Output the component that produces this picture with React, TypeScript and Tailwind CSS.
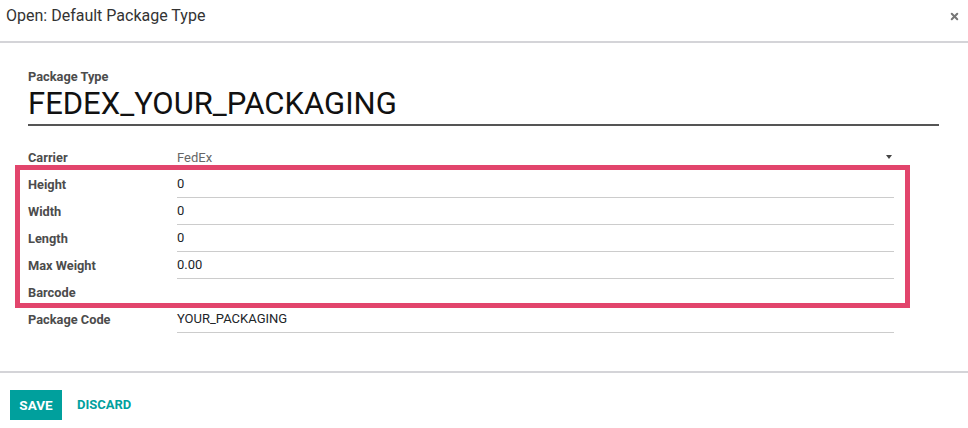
import { X } from "lucide-react";

const rows = [
  { label: "Height", value: "0" },
  { label: "Width", value: "0" },
  { label: "Length", value: "0" },
  { label: "Max Weight", value: "0.00" },
  { label: "Barcode", value: "", noLine: true },
];

const Row = ({ label, value, noLine }: { label: string; value: string; noLine?: boolean }) => (
  <div className="flex h-[27px] items-stretch pl-[28px]">
    <div className="flex w-[149px] items-center text-[12.8px] font-bold text-[#4c4c4c]">{label}</div>
    <div
      className={`flex w-[717px] items-center text-[13px] text-[#212529] ${
        noLine ? "" : "border-b border-[#ccc]"
      }`}
    >
      {value}
    </div>
  </div>
);

const App = () => {
  return (
    <div className="flex h-[428px] w-[968px] flex-col bg-white font-['Roboto',sans-serif]">
      {/* Header */}
      <div className="flex h-[43px] items-center justify-between border-b-2 border-[#d4d4d8] pl-[6px] pr-[8px] pb-[9px]">
        <span className="text-[16px] text-[#333]">Open: Default Package Type</span>
        <X className="h-[11px] w-[11px] text-[#777]" strokeWidth={4.5} />
      </div>

      {/* Body */}
      <div className="flex-1">
        <div className="px-[28px] pt-[27px]">
          <div className="text-[12.8px] font-bold leading-[14px] text-[#4c4c4c]">Package Type</div>
          <div className="mt-[2px] w-[911px] border-b-2 border-[#555] pb-[2px] text-[31px] leading-[36px] text-[#111]">
            FEDEX_YOUR_PACKAGING
          </div>
        </div>

        <div className="relative mt-[18px]">
          {/* Carrier */}
          <div className="flex h-[27px] items-stretch pl-[28px]">
            <div className="flex w-[149px] items-center text-[12.8px] font-bold text-[#4c4c4c]">Carrier</div>
            <div className="flex w-[717px] items-center justify-between text-[13px] text-[#666]">
              <span>FedEx</span>
              <span className="mr-[2px] mb-[1px] h-0 w-0 border-x-[3px] border-t-[4px] border-x-transparent border-t-[#444]" />
            </div>
          </div>

          {rows.map((r) => (
            <Row key={r.label} label={r.label} value={r.value} noLine={r.noLine} />
          ))}

          <Row label="Package Code" value="YOUR_PACKAGING" />

          {/* Highlight box */}
          <div className="pointer-events-none absolute left-[15px] top-[21px] h-[143px] w-[895px] border-[5px] border-[#e2456c]" />
        </div>
      </div>

      {/* Footer */}
      <div className="flex h-[57px] items-start gap-[15px] border-t-2 border-[#d4d4d8] px-[10px] pt-[17px]">
        <button className="h-[30px] w-[52px] bg-[#00a09d] text-[13.5px] font-bold text-white">SAVE</button>
        <button className="h-[30px] text-[13px] font-bold text-[#00a09d]">DISCARD</button>
      </div>
    </div>
  );
};

export default App;
